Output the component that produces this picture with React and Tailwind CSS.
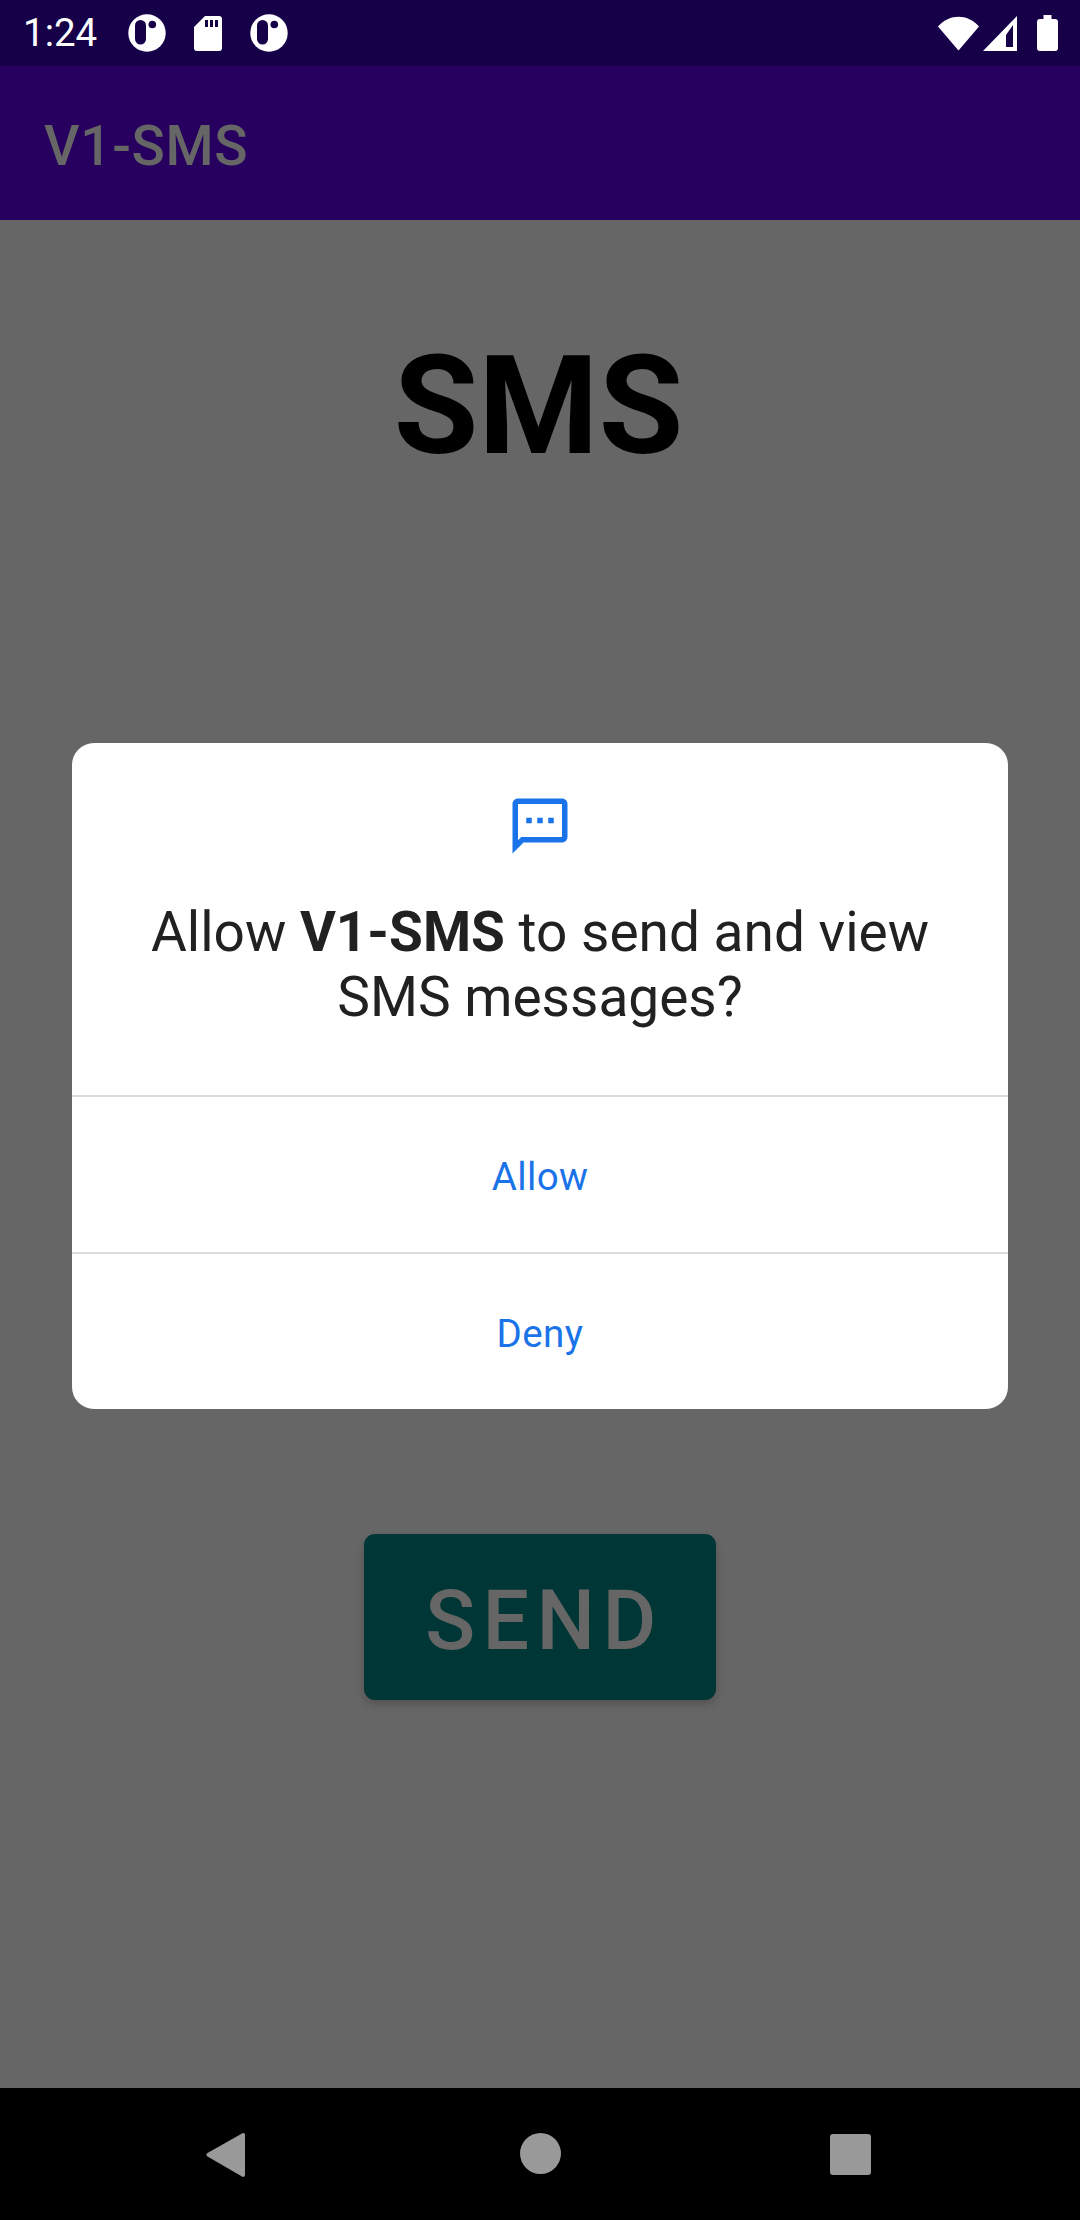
import React from "react";

const font = { fontFamily: "Roboto, sans-serif" };

function DotIcon() {
  return (
    <svg width="38" height="38" viewBox="0 0 38 38" className="block">
      <circle cx="19" cy="19" r="18.7" fill="#fff" />
      <rect x="7" y="6" width="11" height="24.5" rx="5.5" fill="#160048" />
      <circle cx="24.3" cy="10.5" r="3.8" fill="#160048" />
    </svg>
  );
}

function SdIcon() {
  return (
    <svg width="28" height="35" viewBox="0 0 28 35" className="block">
      <path d="M11 0H25a3 3 0 0 1 3 3V32a3 3 0 0 1-3 3H3a3 3 0 0 1-3-3V11Z" fill="#fff" />
      <rect x="11" y="4" width="3" height="7" fill="#160048" />
      <rect x="16" y="4" width="3" height="7" fill="#160048" />
      <rect x="21" y="4" width="3" height="7" fill="#160048" />
    </svg>
  );
}

function WifiIcon() {
  return (
    <svg width="41" height="35" viewBox="0 0 41 35" className="block">
      <path d="M0 10.5C11.5 -2.5 29.5 -2.5 41 10.5L20.5 34.5Z" fill="#fff" />
    </svg>
  );
}

function SignalIcon() {
  return (
    <svg width="34" height="35" viewBox="0 0 34 35" className="block">
      <path fillRule="evenodd" d="M34 0V35H0ZM30 9L23 19V31H30Z" fill="#fff" />
    </svg>
  );
}

function BatteryIcon() {
  return (
    <svg width="21" height="36" viewBox="0 0 21 36" className="block">
      <path d="M6.5 0H14.5V4H18a3 3 0 0 1 3 3V33a3 3 0 0 1-3 3H3a3 3 0 0 1-3-3V7a3 3 0 0 1 3-3H6.5Z" fill="#fff" />
    </svg>
  );
}

function MessageIcon() {
  return (
    <svg width="66" height="66" viewBox="0 0 24 24" className="block">
      <path
        d="M20 2H4c-1.1 0-2 .9-2 2v18l4-4h14c1.1 0 2-.9 2-2V4c0-1.1-.9-2-2-2zm0 14H5.2L4 17.2V4h16v12zM7 9h2v2H7zm4 0h2v2h-2zm4 0h2v2h-2z"
        fill="#1a73e8"
      />
    </svg>
  );
}

export default function App() {
  return (
    <div className="relative flex h-[2220px] w-[1080px] flex-col overflow-hidden bg-[#666666]" style={font}>
      <div className="flex h-[66px] items-center justify-between bg-[#160048] pl-[23px] pr-[22px]">
        <div className="flex items-center">
          <span className="text-[38.5px] leading-none text-white">1:24</span>
          <div className="ml-[31px] flex items-center gap-[28px]">
            <DotIcon />
            <SdIcon />
            <DotIcon />
          </div>
        </div>
        <div className="flex items-center">
          <WifiIcon />
          <div className="ml-[4px]"><SignalIcon /></div>
          <div className="ml-[20px]"><BatteryIcon /></div>
        </div>
      </div>

      <div className="flex h-[154px] items-center bg-[#27005f] pl-[44px] pt-[6px]">
        <span className="text-[55px] font-medium leading-none tracking-[0.69px] text-[#666666]">V1-SMS</span>
      </div>

      <main className="flex flex-1 flex-col items-center">
        <h1 className="mt-[105px] pr-[3px] text-[137.5px] font-bold leading-[162px] text-black">SMS</h1>
        <button className="mt-[1047px] flex h-[166px] w-[352px] items-center justify-center rounded-[11px] bg-[#003636] pl-[9px] pt-[8px] text-[82.5px] font-medium leading-none tracking-[7.4px] text-[#666666] shadow-[0_4px_8px_rgba(0,0,0,0.2)]">
          SEND
        </button>
      </main>

      <div className="flex h-[132px] items-center bg-black">
        <div className="relative h-full w-full">
          <svg width="40" height="46" viewBox="0 0 40 46" className="absolute left-[206px] top-[44px]">
            <path d="M36 1.5C37.5 .5 39 1.5 39 3V43C39 44.5 37.5 45.5 36 44.5L1.5 24.5C0 23.5 0 22 1.5 21Z" fill="#999999" />
          </svg>
          <div className="absolute left-[520px] top-[45px] h-[41px] w-[41px] rounded-full bg-[#999999]" />
          <div className="absolute left-[830px] top-[46px] h-[41px] w-[41px] rounded-[3px] bg-[#999999]" />
        </div>
      </div>

      <div className="absolute left-[72px] top-[743px] w-[936px] overflow-hidden rounded-[22px] bg-white">
        <div className="flex h-[354px] flex-col items-center border-b-2 border-[#dcdcdc] pt-[50px]">
          <MessageIcon />
          <p className="mt-[41px] w-[800px] text-center text-[55px] leading-[65px] text-[#212121]">
            Allow <b className="font-bold">V1-SMS</b> to send and view SMS messages?
          </p>
        </div>
        <div className="flex h-[157px] items-center justify-center border-b-2 border-[#dcdcdc] pt-[4px] text-[38.5px] tracking-[0.4px] text-[#1a73e8]">
          Allow
        </div>
        <div className="flex h-[155px] items-center justify-center pt-[4px] text-[38.5px] tracking-[0.4px] text-[#1a73e8]">Deny</div>
      </div>
    </div>
  );
}
